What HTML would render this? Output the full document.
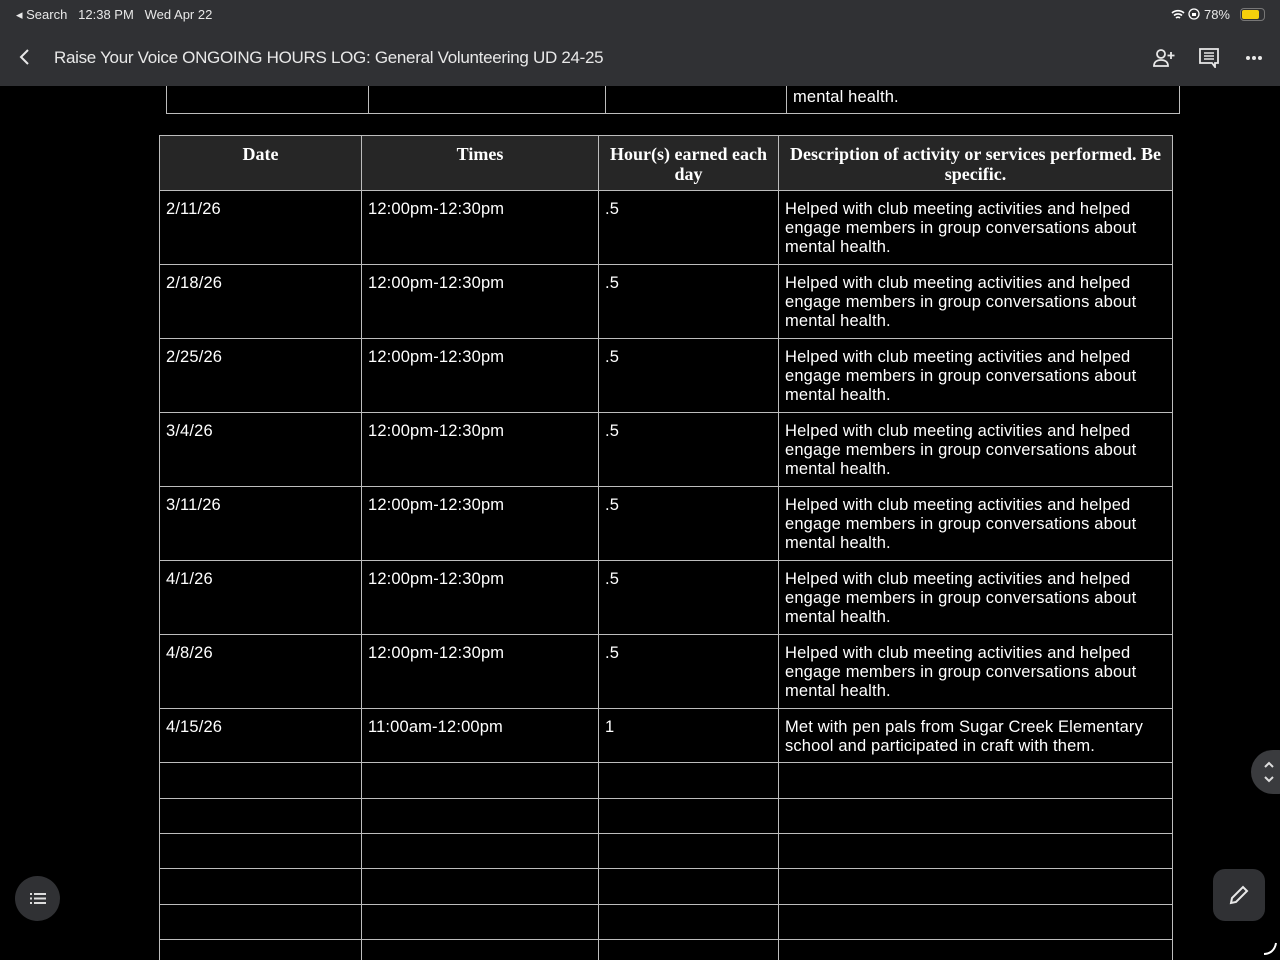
<!DOCTYPE html>
<html style="width:1280px;height:960px;overflow:hidden"><head><meta charset="utf-8"><style>
*{margin:0;padding:0;box-sizing:border-box}
body{width:1280px;height:960px;background:#000;overflow:hidden;position:relative;font-family:"Liberation Sans",sans-serif;color:#fff}
.top{position:absolute;left:0;top:0;width:1280px;height:86px;background:#303134;z-index:5}
.status{position:absolute;top:7px;left:16px;font-size:13px;color:#e8e8e8}
.title{position:absolute;top:48px;left:54px;font-size:17px;color:#e8e8e8;letter-spacing:-0.3px}
.cell{position:absolute;border:1px solid #bdbdbd;font-size:16.5px;line-height:19px;padding:9px 4px 0 6px;letter-spacing:0.15px;overflow:hidden}
.h{background:#262626;font-family:"Liberation Serif",serif;font-weight:bold;text-align:center;font-size:18px;line-height:20px;padding:8px 2px 0 2px;letter-spacing:0}
</style></head><body>
<div class="top">
<div class="status">◂ Search&nbsp;&nbsp; 12:38 PM&nbsp;&nbsp; Wed Apr 22</div>
<div style="position:absolute;top:7px;right:50px;font-size:13px;color:#e8e8e8">
<svg width="14" height="11" viewBox="0 0 14 11" style="vertical-align:-1px"><path d="M1 4a9 9 0 0 1 12 0M3 6.5a6 6 0 0 1 8 0M5 9a3 3 0 0 1 4 0" stroke="#fff" stroke-width="1.6" fill="none"/></svg>
<svg width="12" height="12" viewBox="0 0 12 12" style="vertical-align:-1px"><circle cx="6" cy="6" r="5" stroke="#fff" stroke-width="1.3" fill="none"/><rect x="4" y="5" width="4" height="3" fill="#fff"/></svg> 78%</div>
<div style="position:absolute;top:8px;left:1240px;width:25px;height:13px;border:1px solid #777;border-radius:4px;padding:1px"><div style="width:17px;height:9px;background:#f5cf0b;border-radius:2px"></div></div>
<svg style="position:absolute;left:18px;top:48px" width="14" height="18" viewBox="0 0 14 18"><path d="M10 2L3 9l7 7" stroke="#e8e8e8" stroke-width="2" fill="none"/></svg>
<div class="title">Raise Your Voice ONGOING HOURS LOG: General Volunteering UD 24-25</div>
<svg style="position:absolute;left:1152px;top:48px" width="24" height="20" viewBox="0 0 24 20"><circle cx="9" cy="6" r="4" stroke="#e8e8e8" stroke-width="1.8" fill="none"/><path d="M2 18c0-4 3-6 7-6s7 2 7 6z" stroke="#e8e8e8" stroke-width="1.8" fill="none"/><path d="M19 4v7M15.5 7.5h7" stroke="#e8e8e8" stroke-width="1.8"/></svg>
<svg style="position:absolute;left:1199px;top:48px" width="20" height="20" viewBox="0 0 20 20"><path d="M1 1h18v14h-3v4l-3-4H1z" stroke="#e8e8e8" stroke-width="1.8" fill="none"/><path d="M5 5h10M5 8h10M5 11h10" stroke="#e8e8e8" stroke-width="1.5"/></svg>
<svg style="position:absolute;left:1245px;top:55px" width="18" height="6" viewBox="0 0 18 6"><circle cx="3" cy="3" r="2" fill="#e8e8e8"/><circle cx="9" cy="3" r="2" fill="#e8e8e8"/><circle cx="15" cy="3" r="2" fill="#e8e8e8"/></svg>
</div>
<div class="cell" style="left:166px;top:60px;width:203px;height:54px"></div>
<div class="cell" style="left:368px;top:60px;width:238px;height:54px"></div>
<div class="cell" style="left:605px;top:60px;width:182px;height:54px"></div>
<div class="cell" style="left:786px;top:60px;width:394px;height:54px;padding-top:27px">mental health.</div>
<div id="t"></div>
<div style="position:absolute;left:15px;top:876px;width:45px;height:45px;border-radius:50%;background:#303134">
<svg style="position:absolute;left:14px;top:16px" width="18" height="13" viewBox="0 0 18 13"><path d="M1 2h2M1 6.5h2M1 11h2M5 2h12M5 6.5h12M5 11h12" stroke="#ddd" stroke-width="2"/></svg></div>
<div style="position:absolute;left:1251px;top:750px;width:50px;height:44px;border-radius:22px;background:#3a3b3e">
<svg style="position:absolute;left:12px;top:10px" width="12" height="24" viewBox="0 0 12 24"><path d="M2 7l4-4 4 4M2 17l4 4 4-4" stroke="#ddd" stroke-width="2" fill="none"/></svg></div>
<div style="position:absolute;left:1213px;top:869px;width:52px;height:52px;border-radius:12px;background:#303134">
<svg style="position:absolute;left:15px;top:15px" width="22" height="22" viewBox="0 0 22 22"><path d="M3 19l1-5L15 3l4 4L8 18z" stroke="#e8e8e8" stroke-width="2" fill="none"/></svg></div>
<svg style="position:absolute;left:1262px;top:940px" width="16" height="16" viewBox="0 0 16 16"><path d="M2 14c6 0 11-4 12-11" stroke="#fff" stroke-width="2" fill="none"/></svg>
<script>
var xs=[159,361,598,778,1172];
var rows=[[135,190,['Date','Times','Hour(s) earned each day','Description of activity or services performed. Be specific.'],1]];
var d=['2/11/26','2/18/26','2/25/26','3/4/26','3/11/26','4/1/26','4/8/26'];
var desc='Helped with club meeting activities and helped engage members in group conversations about mental health.';
var y=190;
d.forEach(function(x){rows.push([y,y+74,[x,'12:00pm-12:30pm','.5',desc]]);y+=74;});
rows.push([708,762,['4/15/26','11:00am-12:00pm','1','Met with pen pals from Sugar Creek Elementary school and participated in craft with them.']]);
[[762,798],[798,833],[833,868],[868,904],[904,939],[939,960]].forEach(function(a){rows.push([a[0],a[1],['','','','']]);});
var h='';
rows.forEach(function(r){for(var i=0;i<4;i++){h+='<div class="cell'+(r[3]?' h':'')+'" style="left:'+xs[i]+'px;top:'+r[0]+'px;width:'+(xs[i+1]-xs[i]+1)+'px;height:'+(r[1]-r[0]+1)+'px">'+r[2][i]+'</div>';}});
document.getElementById('t').innerHTML=h;
</script>
</body></html>
